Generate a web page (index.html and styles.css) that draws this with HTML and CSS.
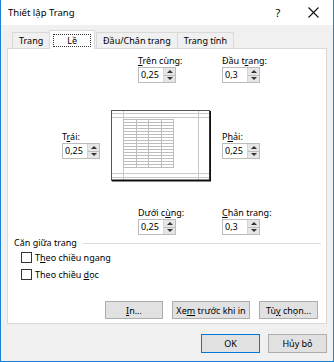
FILE: index.html
```html
<!DOCTYPE html>
<html lang="vi">
<head>
    <meta charset="UTF-8">
    <title>Thiết lập Trang</title>
    <link rel="stylesheet" href="styles.css">
</head>
<body>
    <div class="dialog">
        <div class="titlebar">
            <span class="title">Thiết lập Trang</span>
            <span class="help">?</span>
            <span class="close">
                <svg width="11" height="11" viewBox="0 0 11 11"><path d="M0.5 0.5 L10.5 10.5 M10.5 0.5 L0.5 10.5" stroke="#111" stroke-width="1.1" fill="none"/></svg>
            </span>
        </div>

        <div class="tabs">
            <div class="tab">Trang</div>
            <div class="tab active"><span class="focus">Lề</span></div>
            <div class="tab">Đầu/Chân trang</div>
            <div class="tab">Trang tính</div>
        </div>

        <div class="panel">
            <div class="margins">
                <div class="field top-field">
                    <label><u>T</u>rên cùng:</label>
                    <div class="spin"><span class="val">0,25</span><span class="arrows"><i class="up"></i><i class="down"></i></span></div>
                </div>
                <div class="field head-field">
                    <label>Đầu t<u>r</u>ang:</label>
                    <div class="spin"><span class="val">0,3</span><span class="arrows"><i class="up"></i><i class="down"></i></span></div>
                </div>

                <div class="field left-field">
                    <label>T<u>r</u>ái:</label>
                    <div class="spin"><span class="val">0,25</span><span class="arrows"><i class="up"></i><i class="down"></i></span></div>
                </div>
                <div class="preview">
                    <svg width="100" height="72" viewBox="0 0 100 72">
                        <rect x="0.5" y="0.5" width="98" height="70" fill="#fff" stroke="#555"/>
                        <g stroke="#c8c8c8" stroke-width="1">
                            <line x1="1" y1="3.5" x2="98" y2="3.5"/>
                            <line x1="1" y1="7.5" x2="98" y2="7.5"/>
                            <line x1="1" y1="63.5" x2="98" y2="63.5"/>
                            <line x1="1" y1="67.5" x2="98" y2="67.5"/>
                            <line x1="12.5" y1="1" x2="12.5" y2="70"/>
                            <line x1="87.5" y1="1" x2="87.5" y2="70"/>
                        </g>
                        <g stroke="#bdbdbd" stroke-width="1" id="grid"></g>
                        <path d="M99.5 1 V70.5 H1" stroke="#111" stroke-width="2" fill="none"/>
                    </svg>
                </div>
                <div class="field right-field">
                    <label>P<u>h</u>ải:</label>
                    <div class="spin"><span class="val">0,25</span><span class="arrows"><i class="up"></i><i class="down"></i></span></div>
                </div>

                <div class="field bottom-field">
                    <label>Dưới c<u>ù</u>ng:</label>
                    <div class="spin"><span class="val">0,25</span><span class="arrows"><i class="up"></i><i class="down"></i></span></div>
                </div>
                <div class="field foot-field">
                    <label><u>C</u>hân trang:</label>
                    <div class="spin"><span class="val">0,3</span><span class="arrows"><i class="up"></i><i class="down"></i></span></div>
                </div>
            </div>

            <div class="group">
                <span>Căn giữa trang</span>
                <span class="rule"></span>
            </div>
            <label class="check"><span class="box"></span><span>T<u>h</u>eo chiều ngang</span></label>
            <label class="check"><span class="box"></span><span>Theo chiều <u>d</u>ọc</span></label>

            <div class="actions">
                <button class="btn w-print"><u>I</u>n...</button>
                <button class="btn w-preview">Xe<u>m</u> trước khi in</button>
                <button class="btn w-options">Tù<u>y</u> chọn...</button>
            </div>
        </div>

        <div class="footer">
            <button class="btn w-ok default">OK</button>
            <button class="btn w-cancel">Hủy bỏ</button>
        </div>
    </div>

    <script>
        // vẽ lưới ô trong hình xem trước
        const grid = document.getElementById('grid');
        const ns = 'http://www.w3.org/2000/svg';
        const cols = [12.5, 25.5, 37.5, 50.5, 62.5];
        for (let y = 9.5; y <= 57.5; y += 3) {
            const l = document.createElementNS(ns, 'line');
            l.setAttribute('x1', 12); l.setAttribute('x2', 63);
            l.setAttribute('y1', y); l.setAttribute('y2', y);
            grid.appendChild(l);
        }
        cols.forEach(x => {
            const l = document.createElementNS(ns, 'line');
            l.setAttribute('x1', x); l.setAttribute('x2', x);
            l.setAttribute('y1', 9); l.setAttribute('y2', 58);
            grid.appendChild(l);
        });
    </script>
</body>
</html>
```

FILE: styles.css
```css
* {
    box-sizing: border-box;
}
body {
    margin: 0;
    font-family: "Noto Sans", sans-serif;
    font-size: 9px;
    color: #000;
    background: #fff;
}
.dialog {
    width: 334px;
    height: 362px;
    background: #f0f0f0;
    border: 1px solid #1c7fd6;
    border-top: none;
    display: flex;
    flex-direction: column;
}
.titlebar {
    height: 25px;
    background: #fff;
    display: flex;
    align-items: center;
    padding-left: 7px;
    font-size: 9.5px;
}
.title {
    flex: 1;
}
.help {
    width: 30px;
    text-align: center;
    font-size: 11px;
}
.close {
    width: 40px;
    display: flex;
    justify-content: center;
}
.tabs {
    display: flex;
    align-items: flex-end;
    height: 23px;
    padding-left: 11px;
}
.tab {
    height: 16px;
    padding: 0 6px;
    border: 1px solid #d9d9d9;
    border-bottom: none;
    margin-right: -1px;
    display: flex;
    align-items: center;
    background: #f0f0f0;
    position: relative;
    white-space: nowrap;
}
.tab.active {
    background: #fff;
    padding: 0 3px;
    margin: 0 1px -1px 0;
    height: 19px;
    z-index: 1;
}
.focus {
    border: 1px dotted #333;
    padding: 0 13px;
    line-height: 11px;
}
.panel {
    margin: 0 6px;
    height: 276px;
    background: #fff;
    border: 1px solid #d9d9d9;
    display: flex;
    flex-direction: column;
}
.margins {
    display: grid;
    grid-template-columns: 38px 11px 100px 11px 38px;
    padding: 6px 0 0 54px;
}
.field label {
    display: block;
    white-space: nowrap;
    line-height: 12px;
}
.spin {
    width: 38px;
    height: 16px;
    border: 1px solid #bcbcbc;
    display: flex;
    background: #fff;
}
.val {
    flex: 1;
    padding-left: 2px;
    line-height: 14px;
}
.arrows {
    width: 12px;
    display: flex;
    flex-direction: column;
    border-left: 1px solid #d4d4d4;
    background: #e6e6e6;
}
.arrows i {
    flex: 1;
    display: flex;
    align-items: center;
    justify-content: center;
}
.arrows i::before {
    content: "";
    border-left: 3px solid transparent;
    border-right: 3px solid transparent;
}
.arrows .up {
    border-bottom: 1px solid #bcbcbc;
}
.arrows .up::before {
    border-bottom: 3px solid #333;
}
.arrows .down::before {
    border-top: 3px solid #333;
}
.top-field {
    grid-column: 3;
    grid-row: 1;
    padding-left: 27px;
}
.head-field {
    grid-column: 5;
    grid-row: 1;
}
.left-field {
    grid-column: 1;
    grid-row: 2;
    align-self: center;
}
.preview {
    grid-column: 3;
    grid-row: 2;
    height: 72px;
    margin: 27px 0 25px;
}
.preview svg {
    display: block;
}
.right-field {
    grid-column: 5;
    grid-row: 2;
    align-self: center;
}
.bottom-field {
    grid-column: 3;
    grid-row: 3;
    padding-left: 27px;
}
.foot-field {
    grid-column: 5;
    grid-row: 3;
}
.group {
    display: flex;
    align-items: center;
    gap: 6px;
    margin: 2px 5px 0 6px;
    line-height: 12px;
}
.rule {
    flex: 1;
    height: 1px;
    background: #dcdcdc;
}
.check {
    display: flex;
    align-items: center;
    gap: 3px;
    padding-left: 13px;
    height: 17px;
}
.box {
    width: 11px;
    height: 11px;
    border: 1px solid #333;
    background: #fff;
}
.actions {
    margin-top: auto;
    display: flex;
    justify-content: flex-end;
    gap: 9px;
    padding: 0 8px 4px 0;
}
.btn {
    height: 18px;
    border: 1px solid #adadad;
    background: #e1e1e1;
    font-family: inherit;
    font-size: 9px;
    color: #000;
    padding: 0;
    white-space: nowrap;
}
.w-print { width: 58px; }
.w-preview { width: 78px; }
.w-options { width: 59px; }
.footer {
    display: flex;
    justify-content: flex-end;
    gap: 8px;
    padding: 10px 6px 0 0;
}
.w-ok, .w-cancel {
    width: 59px;
    height: 19px;
}
.btn.default {
    border-color: #0078d7;
}
```
